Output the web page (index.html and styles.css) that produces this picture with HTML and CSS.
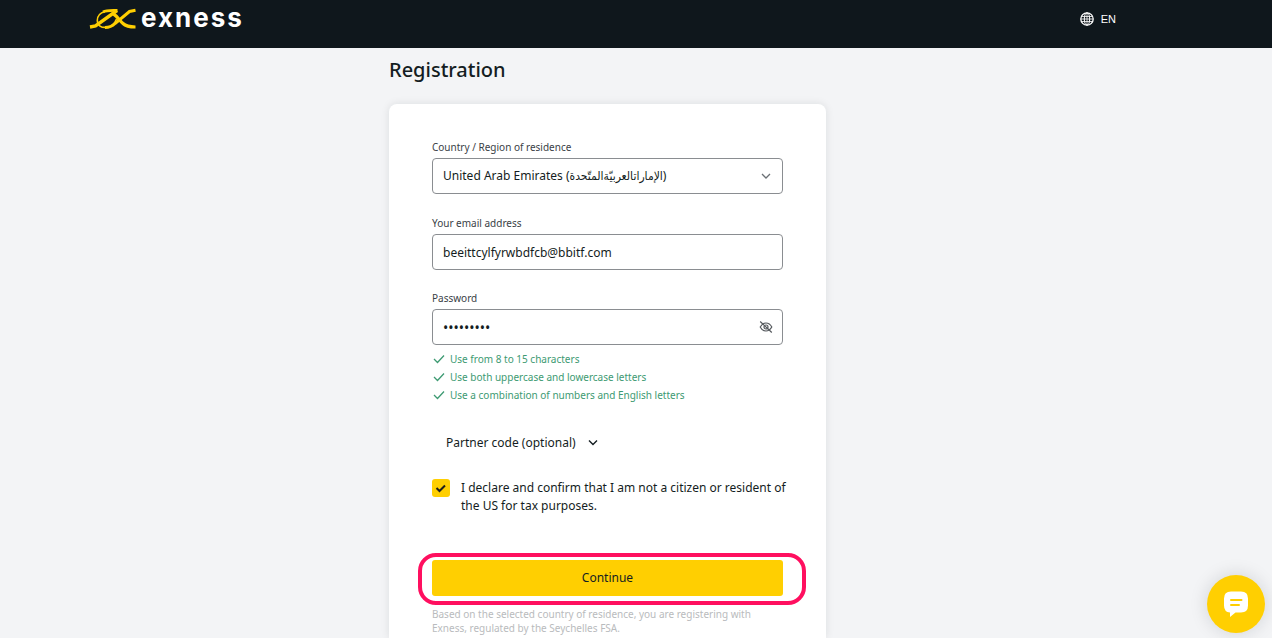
FILE: index.html
```
<!DOCTYPE html>
<html lang="en">
<head>
<meta charset="utf-8">
<meta name="viewport" content="width=device-width, initial-scale=1">
<title>Registration | Exness</title>
<link rel="stylesheet" href="styles.css">
</head>
<body>
<header class="topbar">
  <a class="logo" href="#" aria-label="exness">
    <svg class="logo-mark" viewBox="0 0 48 22" width="48" height="22" aria-hidden="true">
      <g fill="none" stroke="#ffcf01">
        <path d="M16 3.500C10.500 5 8.300 9 8.300 12.500C8.500 17.500 12 20 18 19.300C23 18.500 26 15 27.500 11" stroke-width="1.600"/>
        <path d="M1 19L6.500 18L28 2.500" stroke-width="3.400"/>
        <path d="M14 4C17.500 2 22 2.500 28.500 2.300" stroke-width="2.800"/>
        <path d="M24.500 6C28 8 30.500 12.500 34 15.500C37 18.500 40 19 46.500 19" stroke-width="3.200"/>
        <path d="M46.500 2.300L40.500 3.500L26 15.500C23 18.500 20 19.500 16 19.500" stroke-width="3"/>
      </g>
    </svg>
    <span class="logo-name">exness</span>
  </a>
  <button class="lang" type="button">
    <svg viewBox="0 0 14 14" width="14" height="14" fill="none" stroke="currentColor" aria-hidden="true">
      <circle cx="7" cy="7" r="6.200" stroke-width="1.300"/>
      <ellipse cx="7" cy="7" rx="2.700" ry="6.200"/>
      <path d="M1.500 4.500h11M1 7h12M1.500 9.500h11M7 1v12" stroke-width=".8"/>
    </svg>
    EN
  </button>
</header>

<main class="page">
  <h1 class="title">Registration</h1>
  <form class="card">
    <div class="field">
      <label for="country">Country / Region of residence</label>
      <div class="control">
        <select id="country" class="box">
          <option>United Arab Emirates (&#x202B;الإماراتالعربيّةالمتّحدة&#x202C;)</option>
        </select>
        <svg class="control-icon" viewBox="0 0 14 14" width="14" height="14" fill="none" stroke="#6b7075" stroke-width="1.300" aria-hidden="true"><path d="M3 5l4 4 4-4"/></svg>
      </div>
    </div>
    <div class="field field-email">
      <label for="email">Your email address</label>
      <input id="email" class="box" type="email" value="beeittcylfyrwbdfcb@bbitf.com">
    </div>
    <div class="field field-password">
      <label for="password">Password</label>
      <div class="control">
        <input id="password" class="box password" type="password" value="Passw0rd1">
        <button class="control-button" type="button" aria-label="Show password">
          <svg viewBox="0 0 14 14" width="14" height="14" fill="none" stroke="#55595d" stroke-width="1.200" aria-hidden="true">
            <path d="M1.200 7C3 4 5 3 7 3s4.200 1 5.800 4C11 10 9 11 7 11S2.800 10 1.200 7z"/>
            <circle cx="7" cy="7" r="2"/>
            <path d="M1.200 1.500l11.600 11"/>
          </svg>
        </button>
      </div>
    </div>
    <ul class="rules">
      <li><svg class="tick" viewBox="0 0 12 10" width="12" height="10" aria-hidden="true"><path d="M1 5l3.500 3.500L11 1.500"/></svg>Use from 8 to 15 characters</li>
      <li><svg class="tick" viewBox="0 0 12 10" width="12" height="10" aria-hidden="true"><path d="M1 5l3.500 3.500L11 1.500"/></svg>Use both uppercase and lowercase letters</li>
      <li><svg class="tick" viewBox="0 0 12 10" width="12" height="10" aria-hidden="true"><path d="M1 5l3.500 3.500L11 1.500"/></svg>Use a combination of numbers and English letters</li>
    </ul>
    <button class="partner" type="button">
      Partner code (optional)
      <svg viewBox="0 0 10 10" width="10" height="10" fill="none" stroke="currentColor" stroke-width="1.400" aria-hidden="true"><path d="M1 2.500l4 4 4-4"/></svg>
    </button>
    <div class="declare">
      <span class="check-wrap">
        <input id="declare" class="check" type="checkbox" checked>
        <svg class="check-mark" viewBox="0 0 18 18" width="18" height="18" fill="none" stroke="#20201a" stroke-width="2" aria-hidden="true"><path d="M4.500 9l3 3L13 6.500"/></svg>
      </span>
      <label for="declare">I declare and confirm that I am not a citizen or resident of the US for tax purposes.</label>
    </div>
    <div class="submit">
      <button class="continue" type="submit">Continue</button>
    </div>
    <p class="legal">Based on the selected country of residence, you are registering with Exness, regulated by the Seychelles FSA.</p>
  </form>
</main>

<button class="chat" type="button" aria-label="Open chat">
  <svg viewBox="0 0 26 26" width="26" height="26" aria-hidden="true">
    <path d="M8 .5h10q7 0 7 7v7q0 7-7 7h-5.500L7 26v-4.500q-6-.5-6-7v-7q0-7 7-7z" fill="#fff"/>
    <path d="M8 9h10.500M8 14h8" stroke="#ffcf01" stroke-width="2" stroke-linecap="round"/>
  </svg>
</button>
</body>
</html>
```
FILE: styles.css
```
* {
  box-sizing: border-box;
}

body {
  display: flex;
  flex-direction: column;
  min-height: 100vh;
  margin: 0;
  background: #f3f4f6;
  color: #141d22;
  font-family: "Noto Sans", "DejaVu Sans Condensed", "DejaVu Sans", sans-serif;
  font-size: 12px;
  line-height: 18px;
}

button,
input,
select {
  margin: 0;
  color: inherit;
  font: inherit;
}

button {
  padding: 0;
  border: 0;
  background: none;
  cursor: pointer;
}

.topbar {
  display: flex;
  align-items: flex-start;
  justify-content: space-between;
  height: 48px;
  padding: 6px 156px 0 89px;
  background: #0f171c;
  color: #fff;
}

.logo {
  display: flex;
  gap: 4px;
  color: #fff;
  text-decoration: none;
}

.logo-mark {
  margin-top: 2px;
}

.logo-name {
  font-family: Inter, sans-serif;
  font-size: 26px;
  font-weight: 700;
  letter-spacing: 2px;
  line-height: 24px;
}

.lang {
  display: flex;
  align-items: center;
  gap: 7px;
  height: 26px;
  font-family: "Liberation Sans", sans-serif;
  font-size: 11px;
}

.page {
  display: flex;
  flex: 1;
  flex-direction: column;
  width: 437px;
  max-width: 100%;
  margin-left: 389px;
}

.title {
  margin: 0;
  padding: 6px 0 18px;
  font-size: 20px;
  font-weight: 500;
  line-height: 32px;
}

.card {
  flex: 1;
  padding: 34px 43px 0;
  border-radius: 8px 8px 0 0;
  background: #fff;
  box-shadow: 0 0 8px rgba(20, 29, 34, 0.1);
}

.field {
  display: flex;
  flex-direction: column;
  gap: 2px;
  margin-bottom: 20px;
}

.field label {
  font-size: 10px;
  color: #3a4146;
}

.field-email {
  margin-bottom: 19px;
}

.field-password {
  margin-bottom: 5px;
}

.control {
  position: relative;
}

.box {
  display: block;
  width: 100%;
  height: 36px;
  padding: 0 10px;
  border: 1px solid #8a8d91;
  border-radius: 4px;
  background: #fff;
  appearance: none;
}

.password {
  font-size: 14px;
}

.control-icon,
.control-button {
  position: absolute;
  top: 11px;
  right: 10px;
  display: block;
  height: 14px;
}

.control-button svg {
  display: block;
}

.rules {
  margin: 0;
  padding: 0 0 0 1px;
  list-style: none;
  color: #3d9a72;
  font-size: 10px;
}

.rules li {
  display: flex;
  align-items: center;
  gap: 5px;
}

.tick {
  fill: none;
  stroke: currentColor;
  stroke-width: 1.3;
}

.partner {
  display: flex;
  align-items: center;
  gap: 12px;
  margin: 30px 0 27px 14px;
}

.declare {
  display: flex;
  gap: 11px;
  margin-right: -10px;
}

.check-wrap {
  position: relative;
  height: 18px;
}

.check {
  display: block;
  width: 18px;
  height: 18px;
  border-radius: 3px;
  background: #ffcf01;
  appearance: none;
}

.check-mark {
  position: absolute;
  inset: 0;
  pointer-events: none;
}

.submit {
  position: relative;
  margin: 45px 0 11px;
}

.submit::after {
  content: "";
  position: absolute;
  inset: -7px -23px -9px -14px;
  border: 4px solid #ff0f5f;
  border-radius: 18px;
  pointer-events: none;
}

.continue {
  display: block;
  width: 100%;
  height: 36px;
  border-radius: 3px;
  background: #ffcf01;
}

.legal {
  margin: 0;
  color: #b9bbbd;
  font-size: 10px;
  line-height: 14px;
}

.chat {
  position: fixed;
  right: 7px;
  bottom: 5px;
  display: grid;
  place-items: center;
  width: 58px;
  height: 58px;
  border-radius: 50%;
  background: #ffcf01;
  box-shadow: 0 0 18px rgba(20, 29, 34, 0.15);
}
```
